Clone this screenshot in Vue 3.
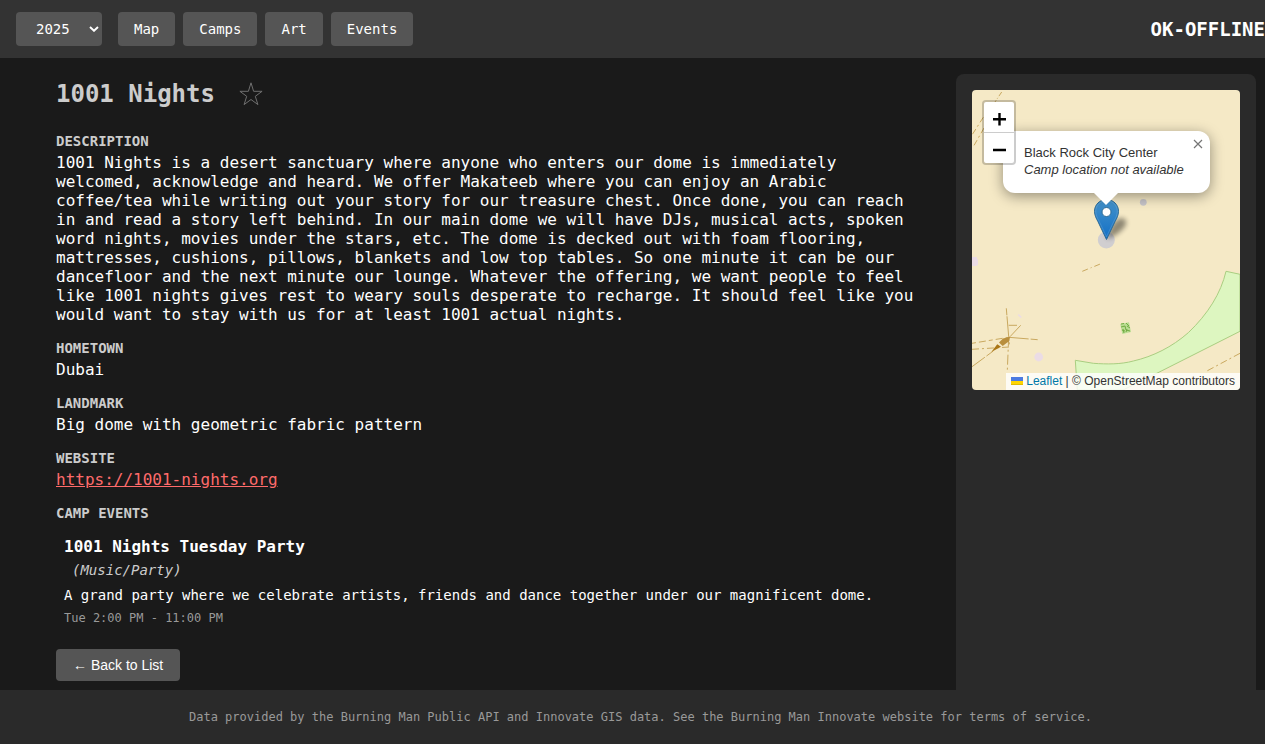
<script setup>
import { ref } from 'vue'

const year = ref('2025')
const years = ['2025', '2024', '2023']
const sections = ['Map', 'Camps', 'Art', 'Events']
const favorite = ref(false)
</script>

<template>
  <div class="app">
    <header class="topbar">
      <nav class="nav" aria-label="Main">
        <div class="year">
          <select v-model="year" aria-label="Year">
            <option v-for="y in years" :key="y" :value="y">{{ y }}</option>
          </select>
          <svg class="chevron" viewBox="0 0 10 6" aria-hidden="true">
            <path d="M1 1 5 4.8 9 1" fill="none" stroke="#fff" stroke-width="1.9" />
          </svg>
        </div>
        <button v-for="s in sections" :key="s" class="btn" type="button">{{ s }}</button>
      </nav>
      <h1 class="brand">OK-OFFLINE</h1>
    </header>

    <main class="main">
      <article class="detail">
        <div class="title">
          <h2>1001 Nights</h2>
          <button class="star" type="button" aria-label="Favorite" :aria-pressed="favorite" @click="favorite = !favorite">
            <svg viewBox="0 0 24 24" aria-hidden="true">
              <path
                d="M12 .8 14.600 9.300H23.100L16.300 14.300 18.900 22.600 12 17.500 5.100 22.600 7.700 14.300 .9 9.300H9.400Z"
                :fill="favorite ? '#666' : 'none'"
                stroke="#707070"
                stroke-width="1"
              />
            </svg>
          </button>
        </div>

        <section class="field">
          <h3>DESCRIPTION</h3>
          <p>1001 Nights is a desert sanctuary where anyone who enters our dome is immediately welcomed, acknowledge and heard. We offer Makateeb where you can enjoy an Arabic coffee/tea while writing out your story for our treasure chest. Once done, you can reach in and read a story left behind. In our main dome we will have DJs, musical acts, spoken word nights, movies under the stars, etc. The dome is decked out with foam flooring, mattresses, cushions, pillows, blankets and low top tables. So one minute it can be our dancefloor and the next minute our lounge. Whatever the offering, we want people to feel like 1001 nights gives rest to weary souls desperate to recharge. It should feel like you would want to stay with us for at least 1001 actual nights.</p>
        </section>
        <section class="field">
          <h3>HOMETOWN</h3>
          <p>Dubai</p>
        </section>
        <section class="field">
          <h3>LANDMARK</h3>
          <p>Big dome with geometric fabric pattern</p>
        </section>
        <section class="field">
          <h3>WEBSITE</h3>
          <p><a href="https://1001-nights.org">https://1001-nights.org</a></p>
        </section>
        <section class="events">
          <h3>CAMP EVENTS</h3>
          <ul>
            <li>
              <strong>1001 Nights Tuesday Party</strong>
              <em>(Music/Party)</em>
              <p>A grand party where we celebrate artists, friends and dance together under our magnificent dome.</p>
              <time>Tue 2:00 PM - 11:00 PM</time>
            </li>
          </ul>
        </section>
        <button class="btn back" type="button">← Back to List</button>
      </article>

      <aside class="side">
        <div class="map">
          <svg class="tiles" viewBox="0 0 268 300" preserveAspectRatio="xMidYMid slice" aria-hidden="true">
            <rect width="268" height="300" fill="#f5e9c6" />
            <path
              d="M254 181.3 268 184.3V241.3L186 282.7 151 300H105.3L103.3 270.3 121.3 273.3C135 274.300 149 274.400 161.300 271C181 266.500 200 257 216.300 242.700C236 224 249 203 254 181.300Z"
              fill="#ddf6c0"
              stroke="#a9cd80"
            />
            <g fill="#ebdce5">
              <path d="M0 167H5V169H6V175L4 176H0Z" />
              <circle cx="66.700" cy="267" r="4.400" />
            </g>
            <path d="M46.300 224.500 49.300 227.500" stroke="#ebdce5" stroke-width="1.500" />
            <g fill="none" stroke="#c9a85f" stroke-width="1">
              <path d="M29.700 2 23 12" stroke-dasharray="5 2 1 2" />
              <path d="M11.300 27.300 0 45M12 38 1.300 56.700" stroke-dasharray="6 3 2 3" />
              <path d="M110.300 181.300 130 173.300" stroke-dasharray="6 3 1 3" />
              <path d="M268 263.300 233 282" stroke-dasharray="7 3 2 3" />
              <path d="M34.300 218.300 36.700 246.700" stroke-dasharray="7 1 22 1" />
              <path d="M36.700 246.700 35.300 281" stroke-dasharray="10 3 2 3" />
              <path d="M36.700 235.300H45M48.700 235.300 38 246.700" />
              <path d="M0 253.300 36.700 247.300" stroke-dasharray="4 3 7 3" />
              <path d="M36.700 247.300 65.700 249.700" stroke-dasharray="20 2" />
              <path d="M0 259.300 37.300 257V251" stroke-dasharray="7 3 2 3" />
              <path d="M0 276.700 21.300 261" stroke-dasharray="16 2" />
            </g>
            <path d="M38 246.700 37.300 251 30.700 256 27 252.500 31 248.500Z" fill="#b98f3d" />
            <path d="M19.300 262 25.300 254.300 29 256.700Z" fill="#aa7615" />
            <path d="M148.300 234 157 232.300 159 242 150.300 244Z" fill="#b9dc92" />
            <path
              d="M149 234 152 233.500M154 233 157 236M149 237 153 236 154 240 158 241M155 236 158 238M151 239 152 243M154 242 155 239M150 240 153 241"
              fill="none"
              stroke="#72ab42"
            />
            <circle cx="134.300" cy="150" r="8.500" fill="#d0ced0" />
            <circle cx="171.300" cy="112.300" r="3.400" fill="#c7c5c9" />
          </svg>

          <svg class="pin" viewBox="0 0 41 41" aria-hidden="true">
            <defs>
              <linearGradient id="pinFill" x1="0" y1="0" x2="0" y2="1">
                <stop offset="0" stop-color="#4593ca" />
                <stop offset="1" stop-color="#126fc6" />
              </linearGradient>
              <filter id="pinBlur" x="-50%" y="-50%" width="200%" height="200%">
                <feGaussianBlur stdDeviation="2.500" />
              </filter>
            </defs>
            <path d="M13 40C14 30 21 19 28 19C37 21 31 33 13 40Z" fill="#000" opacity=".42" filter="url(#pinBlur)" />
            <path
              d="M12.500 .5C5.600 .5 .5 5.800 .5 12.300C.5 16.300 2.300 19.500 4 22.700L12.500 40.500 21 22.700C22.700 19.500 24.500 16.300 24.500 12.300C24.500 5.800 19.400 .5 12.500 .5Z"
              fill="url(#pinFill)"
              stroke="#2e6c97"
            />
            <path
              d="M12.500 1.700C6.300 1.700 1.700 6.500 1.700 12.300C1.700 16 3.400 19 5.100 22.200L12.500 37.700 19.900 22.200C21.600 19 23.300 16 23.300 12.300C23.300 6.500 18.700 1.700 12.500 1.700Z"
              fill="none"
              stroke="#fff"
              stroke-opacity=".13"
            />
            <circle cx="12.500" cy="13" r="4.500" fill="#fff" stroke="#2e6c97" />
          </svg>

          <div class="popup">
            <p>Black Rock City Center<br /><em>Camp location not available</em></p>
            <button class="close" type="button" aria-label="Close popup">
              <svg viewBox="0 0 10 10" aria-hidden="true">
                <path d="M1 1 9 9M9 1 1 9" stroke="#757575" stroke-width="1.200" />
              </svg>
            </button>
          </div>

          <div class="zoom">
            <button type="button" aria-label="Zoom in">
              <svg viewBox="0 0 14 14" aria-hidden="true"><path d="M7.500 1V13.500M1 7.300H14" stroke="#000" stroke-width="2.400" /></svg>
            </button>
            <button type="button" aria-label="Zoom out">
              <svg viewBox="0 0 14 14" aria-hidden="true"><path d="M1 7H14" stroke="#000" stroke-width="2.400" /></svg>
            </button>
          </div>

          <div class="attribution">
            <a href="https://leafletjs.com"><svg viewBox="0 0 12 8" aria-hidden="true"><path fill="#4c7be1" d="M0 0h12v4H0z" /><path fill="#ffd500" d="M0 4h12v3H0z" /><path fill="#e0bc00" d="M0 7h12v1H0z" /></svg>Leaflet</a> | © OpenStreetMap contributors
          </div>
        </div>
      </aside>
    </main>

    <footer class="footer">Data provided by the Burning Man Public API and Innovate GIS data. See the Burning Man Innovate website for terms of service.</footer>
  </div>
</template>

<style>
body {
  margin: 0;
  background: #1a1a1a;
}
</style>

<style scoped>
.app {
  display: flex;
  flex-direction: column;
  min-height: 100vh;
  background: #1a1a1a;
  color: #fff;
  font-family: "DejaVu Sans Mono", monospace;
  font-size: 16px;
  line-height: 19px;
}
h1, h2, h3, p, ul {
  margin: 0;
  padding: 0;
}
button, select {
  font-family: inherit;
  cursor: pointer;
}
.topbar {
  display: flex;
  justify-content: space-between;
  align-items: center;
  padding: 12px 0 12px 16px;
  background: #333;
}
.nav {
  display: flex;
  gap: 8px;
}
.year {
  position: relative;
  margin-right: 8px;
}
.year select {
  appearance: none;
  width: 86px;
  height: 34px;
  padding: 0 20px;
  border: 0;
  border-radius: 4px;
  background: #555;
  color: #fff;
  font-size: 14px;
}
.chevron {
  position: absolute;
  right: 3px;
  top: 14px;
  width: 10px;
  height: 6px;
  pointer-events: none;
}
.btn {
  height: 34px;
  padding: 0 16px;
  border: 0;
  border-radius: 4px;
  background: #555;
  color: #fff;
  font-size: 14px;
}
.brand {
  font-size: 19px;
  line-height: 24px;
}
.main {
  flex: 1;
  display: flex;
  padding: 16px 9px 0 56px;
}
.detail {
  flex: 1;
  min-width: 0;
  padding-bottom: 8px;
}
.field p {
  max-width: 868px;
}
.title {
  display: flex;
  align-items: center;
  gap: 24px;
  height: 40px;
  margin-bottom: 19px;
}
.title h2 {
  color: #ccc;
  font-size: 24px;
  line-height: 32px;
}
.star {
  display: flex;
  padding: 0;
  border: 0;
  background: none;
}
.star svg {
  width: 24px;
  height: 24px;
}
h3 {
  margin-bottom: 4px;
  color: #ccc;
  font-size: 14px;
  line-height: 16px;
}
.field {
  margin-bottom: 16px;
}
.field a {
  color: #ff6b6b;
}
.events h3 {
  margin-bottom: 14px;
}
.events ul {
  padding-left: 8px;
  list-style: none;
}
.events strong {
  display: block;
  line-height: 24px;
}
.events em {
  display: block;
  margin: 0 0 2px 8px;
  color: #ccc;
  font-size: 14px;
  line-height: 22px;
}
.events p {
  font-size: 14px;
  line-height: 24px;
}
.events time {
  display: block;
  color: #999;
  font-size: 12px;
  line-height: 22px;
}
.back {
  height: 32px;
  margin-top: 20px;
  padding: 0 17px;
  font-family: "Liberation Sans", Arial, sans-serif;
}
.side {
  box-sizing: border-box;
  flex: 0 0 300px;
  padding: 16px;
  border-radius: 8px 8px 0 0;
  background: #2a2a2a;
}
.map {
  position: relative;
  height: 300px;
  overflow: hidden;
  border-radius: 4px;
  color: #333;
  font-family: "Liberation Sans", Arial, sans-serif;
  font-size: 13px;
}
.tiles {
  display: block;
  width: 100%;
  height: 100%;
}
.pin {
  position: absolute;
  left: 122px;
  top: 109px;
  width: 41px;
  height: 41px;
  overflow: visible;
}
.popup {
  position: absolute;
  left: 31px;
  top: 41px;
  box-sizing: border-box;
  width: 207px;
  padding: 13px 21px 15px;
  border-radius: 12px;
  background: #fff;
  box-shadow: 0 3px 14px rgba(0, 0, 0, 0.4);
  line-height: 17px;
  white-space: nowrap;
}
.popup::after {
  content: "";
  position: absolute;
  left: 91px;
  top: 100%;
  border: 12px solid transparent;
  border-top-color: #fff;
  border-bottom: 0;
}
.close {
  position: absolute;
  top: 8px;
  right: 7px;
  display: flex;
  padding: 0;
  border: 0;
  background: none;
}
.close svg {
  width: 10px;
  height: 10px;
}
.zoom {
  position: absolute;
  left: 10px;
  top: 10px;
  border: 2px solid rgba(0, 0, 0, 0.2);
  border-radius: 4px;
  background: #fff;
  background-clip: padding-box;
}
.zoom button {
  display: flex;
  align-items: center;
  justify-content: center;
  width: 30px;
  height: 30px;
  padding: 4px 0 0;
  border: 0;
  background: none;
}
.zoom button + button {
  box-sizing: content-box;
  height: 26px;
  border-top: 1px solid #ccc;
}
.zoom svg {
  width: 14px;
  height: 14px;
}
.attribution {
  position: absolute;
  right: 0;
  bottom: 0;
  padding: 0 5px;
  background: rgba(255, 255, 255, 0.8);
  font-size: 12px;
  line-height: 17px;
  white-space: nowrap;
}
.attribution a {
  color: #0078a8;
  text-decoration: none;
}
.attribution svg {
  width: 12px;
  height: 8px;
  margin-right: 3px;
}
.footer {
  padding: 16px 0 16px 16px;
  background: #2a2a2a;
  color: #999;
  font-size: 12px;
  line-height: 22px;
  text-align: center;
}
</style>
